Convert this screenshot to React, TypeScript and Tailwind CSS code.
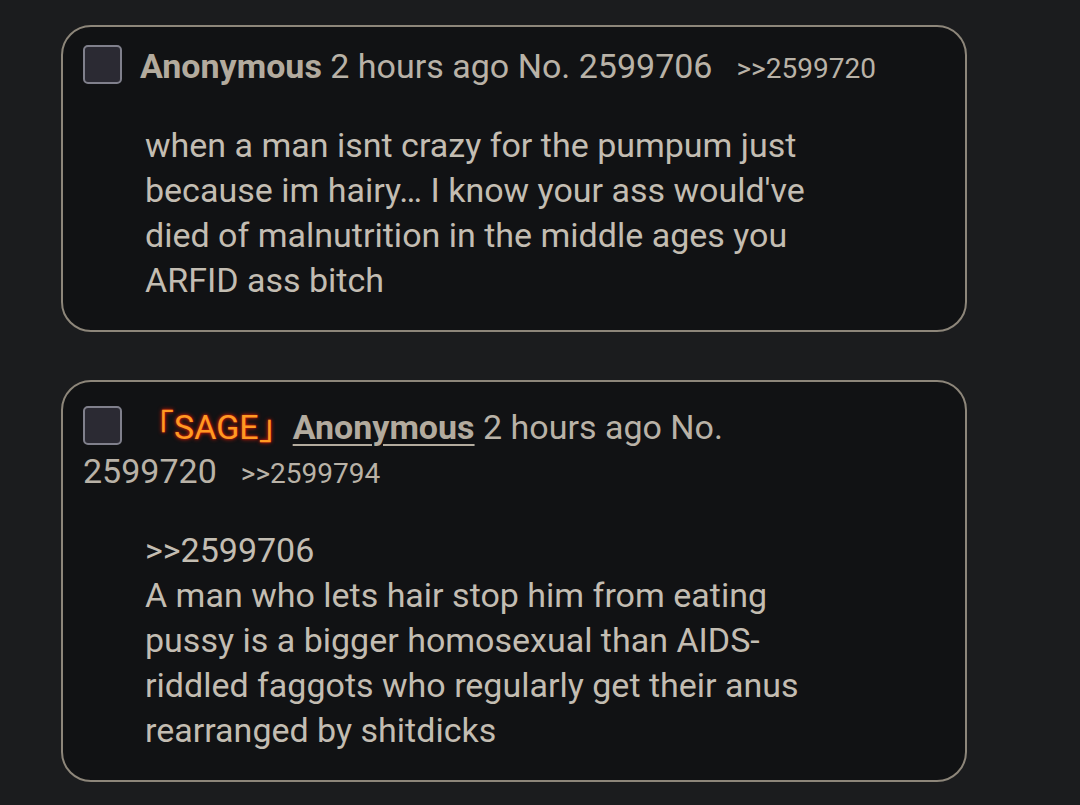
const font = { fontFamily: "Roboto, 'Noto Sans CJK JP', sans-serif" };

interface PostProps {
  id: string;
  replies: string[];
  sage?: boolean;
  lines: string[];
}

function Post({ id, replies, sage, lines }: PostProps) {
  return (
    <div
      className={
        sage
          ? "w-[906px] rounded-[30px] border-[2.5px] border-[#8d867a] bg-[#111214] px-[20px] pt-[23px] pb-[27px]"
          : "w-[906px] rounded-[30px] border-[2.5px] border-[#8d867a] bg-[#111214] px-[20px] pt-[17px] pb-[27px]"
      }
    >
      <div className="text-[34px] leading-[44px] text-[#b9b2a7]">
        <span className="mr-[18px] inline-block h-[39px] w-[39px] rounded-[5px] border-2 border-[#80808c] bg-[#2b2a33] align-[-6px]" />
        {sage && (
          <span className="text-[#ff9a22] [text-shadow:0_0_4px_#e0200a,0_0_2px_#c01000]">「SAGE」</span>
        )}
        <span
          className={
            sage
              ? "font-bold text-[#b3ab9e] underline decoration-2 underline-offset-[5px]"
              : "font-bold text-[#b3ab9e]"
          }
        >
          Anonymous
        </span>{" "}
        2 hours ago No.{" "}
        <span className="whitespace-nowrap">
          {id}
          {replies.map((r) => (
            <span key={r} className="ml-[24px] text-[28px] text-[#b9b2a7]">
              &gt;&gt;{r}
            </span>
          ))}
        </span>
      </div>
      <div className="mt-[32px] pl-[62px] pr-[60px] text-[34px] leading-[45px] text-[#c3bdb2]">
        {lines.map((l, i) => (
          <div key={i}>{l}</div>
        ))}
      </div>
    </div>
  );
}

export default function App() {
  return (
    <div style={font} className="flex min-h-[805px] w-full flex-col gap-[48px] bg-[#1b1c1e] pl-[61px] pt-[25px]">
      <Post
        id="2599706"
        replies={["2599720"]}
        lines={[
          "when a man isnt crazy for the pumpum just",
          "because im hairy… I know your ass would've",
          "died of malnutrition in the middle ages you",
          "ARFID ass bitch",
        ]}
      />
      <Post
        id="2599720"
        sage
        replies={["2599794"]}
        lines={[
          ">>2599706",
          "A man who lets hair stop him from eating",
          "pussy is a bigger homosexual than AIDS-",
          "riddled faggots who regularly get their anus",
          "rearranged by shitdicks",
        ]}
      />
    </div>
  );
}
